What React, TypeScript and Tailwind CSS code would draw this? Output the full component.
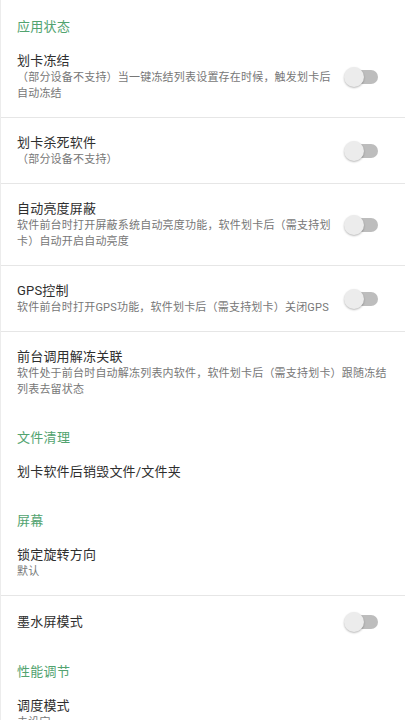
import React, { useState } from 'react';

type Item = { title: string; sub?: string; toggle?: boolean };
type Section = { title: string; items: Item[] };

const sections: Section[] = [
  {
    title: '应用状态',
    items: [
      { title: '划卡冻结', sub: '（部分设备不支持）当一键冻结列表设置存在时候，触发划卡后自动冻结', toggle: true },
      { title: '划卡杀死软件', sub: '（部分设备不支持）', toggle: true },
      { title: '自动亮度屏蔽', sub: '软件前台时打开屏蔽系统自动亮度功能，软件划卡后（需支持划卡）自动开启自动亮度', toggle: true },
      { title: 'GPS控制', sub: '软件前台时打开GPS功能，软件划卡后（需支持划卡）关闭GPS', toggle: true },
      { title: '前台调用解冻关联', sub: '软件处于前台时自动解冻列表内软件，软件划卡后（需支持划卡）跟随冻结列表去留状态' },
    ],
  },
  { title: '文件清理', items: [{ title: '划卡软件后销毁文件/文件夹' }] },
  {
    title: '屏幕',
    items: [
      { title: '锁定旋转方向', sub: '默认' },
      { title: '墨水屏模式', toggle: true },
    ],
  },
  { title: '性能调节', items: [{ title: '调度模式', sub: '未设定' }] },
];

const Switch: React.FC<{ on: boolean; onChange: () => void }> = ({ on, onChange }) => (
  <button onClick={onChange} className="relative w-[34px] h-[20px] shrink-0 ml-3">
    <span className={`absolute left-[1px] right-0 top-[3px] h-[14px] rounded-full ${on ? 'bg-[#9fd4b2]' : 'bg-[#bdbdbd]'}`} />
    <span
      className={`absolute top-0 w-[20px] h-[20px] rounded-full shadow-[0_1px_2px_rgba(0,0,0,0.28)] ${
        on ? 'left-[14px] bg-[#52a36f]' : 'left-0 bg-[#ececec]'
      }`}
    />
  </button>
);

const Row: React.FC<{ item: Item; last: boolean }> = ({ item, last }) => {
  const [on, setOn] = useState(false);
  return (
    <div
      className={`flex items-center pl-4 pt-4 pb-[15px] ${item.toggle ? 'pr-[27px]' : 'pr-3'} ${
        last ? '' : 'border-b border-[#e6e6e6]'
      }`}
    >
      <div className="flex-1 min-w-0">
        <div className="text-[13px] leading-[18px] tracking-[0.2px] text-[#2e2e2e]">{item.title}</div>
        {item.sub && (
          <div className="text-[11px] leading-[16px] tracking-[0.2px] text-[#777]">{item.sub}</div>
        )}
      </div>
      {item.toggle && <Switch on={on} onChange={() => setOn(!on)} />}
    </div>
  );
};

export default function App() {
  return (
    <div
      className="min-h-screen bg-white pt-[3px] border-l border-[#ececec]"
      style={{ fontFamily: 'Roboto, "Noto Sans CJK SC", sans-serif' }}
    >
      {sections.map((s, i) => (
        <div key={s.title}>
          <div
            className={`pl-4 ${i === 0 ? 'pt-[15px]' : 'pt-4'} text-[13px] leading-[18px] tracking-[0.3px] text-[#52a36f]`}
          >
            {s.title}
          </div>
          {s.items.map((it, j) => (
            <Row key={it.title} item={it} last={j === s.items.length - 1} />
          ))}
        </div>
      ))}
    </div>
  );
}
